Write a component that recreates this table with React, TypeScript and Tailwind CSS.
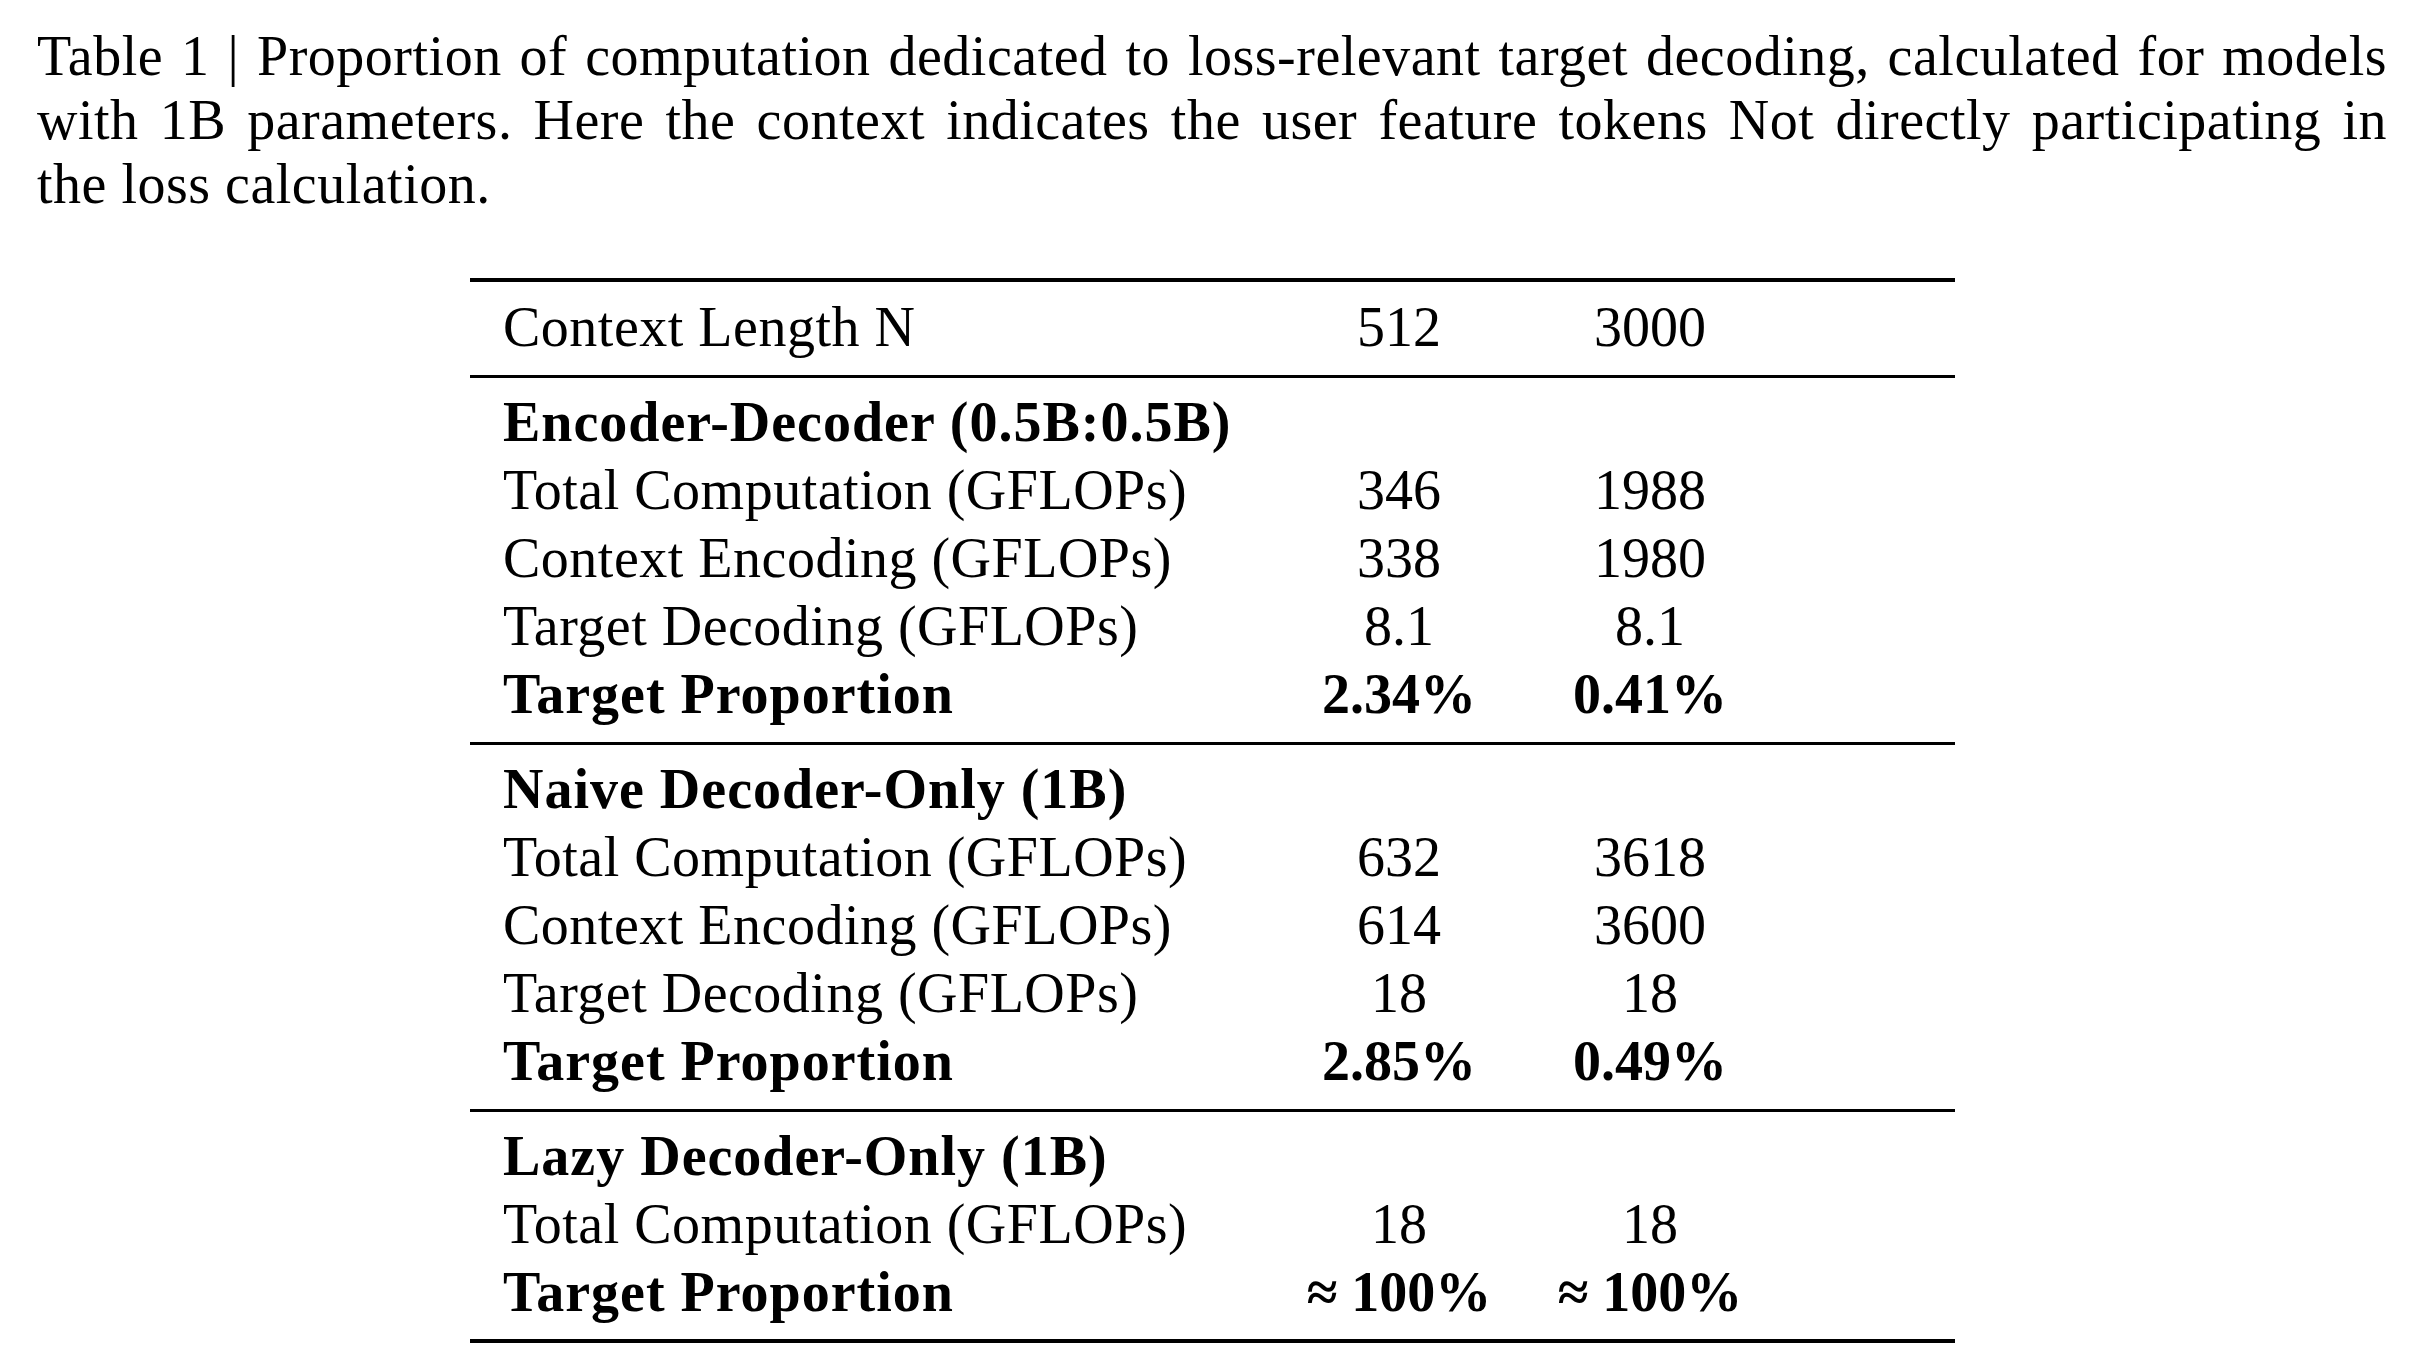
import React from "react";

type Row = {
  label: string;
  a: string;
  b: string;
  bold?: boolean;
};

type Group = {
  title: string;
  rows: Row[];
};

const groups: Group[] = [
  {
    title: "Encoder-Decoder (0.5B:0.5B)",
    rows: [
      { label: "Total Computation (GFLOPs)", a: "346", b: "1988" },
      { label: "Context Encoding (GFLOPs)", a: "338", b: "1980" },
      { label: "Target Decoding (GFLOPs)", a: "8.1", b: "8.1" },
      { label: "Target Proportion", a: "2.34%", b: "0.41%", bold: true },
    ],
  },
  {
    title: "Naive Decoder-Only (1B)",
    rows: [
      { label: "Total Computation (GFLOPs)", a: "632", b: "3618" },
      { label: "Context Encoding (GFLOPs)", a: "614", b: "3600" },
      { label: "Target Decoding (GFLOPs)", a: "18", b: "18" },
      { label: "Target Proportion", a: "2.85%", b: "0.49%", bold: true },
    ],
  },
  {
    title: "Lazy Decoder-Only (1B)",
    rows: [
      { label: "Total Computation (GFLOPs)", a: "18", b: "18" },
      { label: "Target Proportion", a: "≈ 100%", b: "≈ 100%", bold: true },
    ],
  },
];

function TableRow({ label, a, b, bold }: Row) {
  return (
    <div className={"flex h-[68px] items-center " + (bold ? "font-bold" : "")}>
      <div className={"w-[819px] pl-[33px] " + (bold ? "tracking-[1px]" : "tracking-[0.5px]")}>
        {label}
      </div>
      <div className="w-[220px] text-center">{a}</div>
      <div className="ml-[31px] w-[220px] text-center">{b}</div>
    </div>
  );
}

export default function App() {
  return (
    <div className="min-h-screen bg-white text-black font-['Liberation_Serif',serif]">
      {/* caption, first two lines justified to the full width */}
      <div className="pl-[37px] pt-[24px]">
        <div className="w-[2350px] text-[56px] leading-[64px] tracking-[0.5px]">
          <div className="text-justify [text-align-last:justify]">
            Table 1 | Proportion of computation dedicated to loss-relevant target decoding, calculated for models
          </div>
          <div className="text-justify [text-align-last:justify]">
            with 1B parameters. Here the context indicates the user feature tokens Not directly participating in
          </div>
          <div>the loss calculation.</div>
        </div>
      </div>

      <div className="ml-[470px] mt-[62px] w-[1485px] text-[56px] leading-[68px]">
        <div className="h-[4px] bg-black" />
        <div className="pb-[14px] pt-[11px]">
          <TableRow label="Context Length N" a="512" b="3000" />
        </div>
        {groups.map((g, i) => (
          <div key={g.title}>
            <div className="h-[3px] bg-black" />
            <div className={i === groups.length - 1 ? "pb-[13px] pt-[10px]" : "pb-[14px] pt-[10px]"}>
              <div className="flex h-[68px] items-center pl-[33px] font-bold tracking-[1px]">{g.title}</div>
              {g.rows.map((r) => (
                <TableRow key={r.label} {...r} />
              ))}
            </div>
          </div>
        ))}
        <div className="h-[4px] bg-black" />
      </div>
    </div>
  );
}
